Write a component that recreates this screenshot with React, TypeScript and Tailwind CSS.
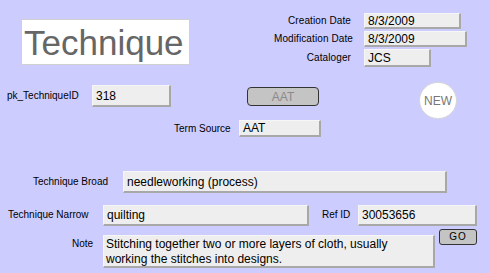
import React from "react";

const fieldCls =
  "bg-[#eeeeee] border-t border-l border-t-[#f6f6f6] border-l-[#f6f6f6] border-b-2 border-r-2 border-b-[#a8a8a8] border-r-[#a8a8a8] text-[12px] text-black leading-none flex items-center pl-[3px] whitespace-nowrap overflow-hidden";
const labelCls = "text-[10px] text-black leading-none whitespace-nowrap";

export default function App() {
  return (
    <div
      className="w-[490px] h-[273px] bg-[#ccccff] overflow-hidden flex flex-col"
      style={{ fontFamily: '"Liberation Sans", Arial, sans-serif' }}
    >
      {/* top section */}
      <div className="flex pt-[13px]">
        <div className="ml-[21px] mt-[6px] w-[169px] h-[46px] bg-white border border-[#d0d0d0] flex items-center pl-[2px]">
          <span className="text-[35px] leading-none text-[#666666]">Technique</span>
        </div>
        <div className="flex flex-col gap-[2px] ml-[84px]">
          <div className="flex items-center h-[16px]">
            <div className={`${labelCls} w-[77px] text-right tracking-[0.1px]`}>Creation Date</div>
            <div className={`${fieldCls} ml-[13px] w-[97px] h-[16px]`}>8/3/2009</div>
          </div>
          <div className="flex items-center h-[16px]">
            <div className={`${labelCls} w-[77px] text-right tracking-[0.1px]`}>Modification Date</div>
            <div className={`${fieldCls} ml-[13px] w-[103px] h-[16px]`}>8/3/2009</div>
          </div>
          <div className="flex items-center h-[18px]">
            <div className={`${labelCls} w-[77px] text-right tracking-[0.1px]`}>Cataloger</div>
            <div className={`${fieldCls} ml-[13px] w-[67px] h-[18px]`}>JCS</div>
          </div>
        </div>
      </div>

      {/* id / button / new row */}
      <div className="flex items-start mt-[15px] h-[38px]">
        <div className="flex items-center mt-[3px] h-[22px]">
          <div className={`${labelCls} ml-[7px] w-[72px]`}>pk_TechniqueID</div>
          <div className={`${fieldCls} ml-[13px] w-[79px] h-[22px]`}>318</div>
        </div>
        <div className="ml-[76px] mt-[5px] w-[72px] h-[19px] rounded-[4px] border border-[#333333] bg-[#c4c4c4] flex items-center justify-center text-[12px] text-[#8a8a8a] leading-none">
          AAT
        </div>
        <div className="ml-[100px] w-[38px] h-[37px] rounded-full bg-white border border-[#d4d4d4] flex items-center justify-center text-[12px] text-[#777777] leading-none">
          NEW
        </div>
      </div>

      {/* term source */}
      <div className="flex items-center h-[17px]">
        <div className={`${labelCls} ml-[174px] w-[53px]`}>Term Source</div>
        <div className={`${fieldCls} ml-[12px] w-[82px] h-[17px] pl-[2px]`}>AAT</div>
      </div>

      {/* broad */}
      <div className="flex items-center mt-[34px] h-[22px]">
        <div className={`${labelCls} ml-[33px] w-[77px]`}>Technique Broad</div>
        <div className={`${fieldCls} ml-[13px] w-[324px] h-[22px] pl-[2px]`}>needleworking (process)</div>
      </div>

      {/* narrow / ref id */}
      <div className="flex items-center mt-[11px] h-[22px]">
        <div className={`${labelCls} ml-[8px] w-[83px]`}>Technique Narrow</div>
        <div className={`${fieldCls} ml-[12px] w-[206px] h-[21px] pl-[2px]`}>quilting</div>
        <div className={`${labelCls} ml-[13px] w-[26px]`}>Ref ID</div>
        <div className={`${fieldCls} ml-[10px] w-[119px] h-[21px] pl-[2px]`}>30053656</div>
      </div>

      {/* note / go */}
      <div className="flex items-start mt-[3px]">
        <div className={`${labelCls} ml-[72px] w-[20px] mt-[10px]`}>Note</div>
        <div className="ml-[11px] mt-[6px] w-[332px] h-[33px] bg-[#eeeeee] border-t border-l border-t-[#f6f6f6] border-l-[#f6f6f6] border-b-2 border-r-2 border-b-[#a8a8a8] border-r-[#a8a8a8] text-[12px] text-black leading-[15px] pl-[2px] pt-[1px]">
          Stitching together two or more layers of cloth, usually
          <br />
          working the stitches into designs.
        </div>
        <div className="ml-[4px] w-[38px] h-[16px] rounded-[3px] border border-[#333333] bg-[#c4c4c4] flex items-center justify-center text-[10px] text-black leading-none tracking-[1px]">
          GO
        </div>
      </div>
    </div>
  );
}
